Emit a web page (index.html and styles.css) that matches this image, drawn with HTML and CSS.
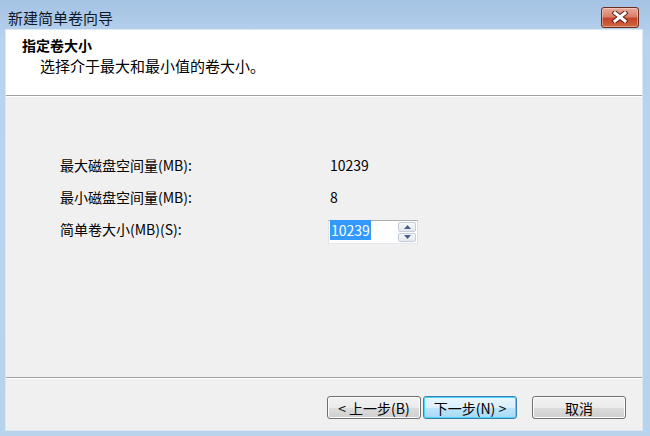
FILE: index.html
```html
<!DOCTYPE html>
<html lang="zh-CN">
<head>
  <meta charset="UTF-8">
  <title>新建简单卷向导</title>
  <link rel="stylesheet" href="styles.css">
</head>
<body>

<div class="ventana">
  <!-- Barra de título -->
  <div class="titulo">
    <span class="titulo-texto">新建简单卷向导</span>
    <div class="cerrar">
      <svg width="16" height="12" viewBox="0 0 16 12">
        <path d="M3 2 L13 10 M13 2 L3 10" stroke="#5a2014" stroke-width="5" stroke-linecap="square"/>
        <path d="M3 2 L13 10 M13 2 L3 10" stroke="#ffffff" stroke-width="3" stroke-linecap="square"/>
      </svg>
    </div>
  </div>

  <div class="cliente">
    <!-- Cabecera blanca -->
    <div class="cabecera">
      <div class="cabecera-titulo">指定卷大小</div>
      <div class="cabecera-sub">选择介于最大和最小值的卷大小。</div>
    </div>

    <!-- Contenido -->
    <div class="cuerpo">
      <div class="fila">
        <span class="etiqueta">最大磁盘空间量(MB):</span>
        <span class="valor">10239</span>
      </div>
      <div class="fila">
        <span class="etiqueta">最小磁盘空间量(MB):</span>
        <span class="valor">8</span>
      </div>
      <div class="fila">
        <span class="etiqueta">简单卷大小(MB)(S):</span>
        <div class="spin">
          <div class="spin-campo"><span class="seleccion">10239</span></div>
          <div class="spin-botones">
            <div class="spin-btn">
              <svg width="7" height="4" viewBox="0 0 7 4"><path d="M0 4 L3.5 0 L7 4 Z" fill="#4b5f86"/></svg>
            </div>
            <div class="spin-btn">
              <svg width="7" height="4" viewBox="0 0 7 4"><path d="M0 0 L3.5 4 L7 0 Z" fill="#4b5f86"/></svg>
            </div>
          </div>
        </div>
      </div>
    </div>

    <!-- Botones -->
    <div class="pie">
      <button class="boton">&lt; 上一步(B)</button>
      <button class="boton activo">下一步(N) &gt;</button>
      <button class="boton cancelar">取消</button>
    </div>
  </div>
</div>

</body>
</html>
```

FILE: styles.css
```css
* {
  box-sizing: border-box;
}

body {
  margin: 0;
  font-family: "Noto Sans CJK SC", "Noto Sans", sans-serif;
  font-size: 14px;
  color: #000;
  background: #b9d1ea;
}

.ventana {
  width: 650px;
  height: 436px;
  display: flex;
  flex-direction: column;
  padding: 0 8px 6px 6px;
  background: linear-gradient(#a4c2e4, #b9d3ee 40px, #bad3ed);
}

.titulo {
  height: 30px;
  display: flex;
  align-items: center;
  justify-content: space-between;
  padding-left: 2px;
}

.titulo-texto {
  font-size: 15px;
  color: #0f1a28;
  margin-top: 4px;
}

.cerrar {
  width: 38px;
  height: 21px;
  margin-right: 3px;
  margin-top: 4px;
  border: 1px solid #6b2c22;
  border-radius: 3px;
  background: linear-gradient(#e9aa9a, #d9806b 45%, #c4452b 55%, #d0663f);
  display: flex;
  align-items: center;
  justify-content: center;
  box-shadow: inset 0 0 0 1px rgba(255, 255, 255, 0.35);
}

.cliente {
  flex: 1;
  display: flex;
  flex-direction: column;
  background: #f0f0f0;
  box-shadow: 0 0 0 1px #dce7f4;
}

.cabecera {
  height: 66px;
  background: #fff;
  border-bottom: 1px solid #a0a0a0;
  padding: 5px 0 0 16px;
}

.cabecera-titulo {
  font-weight: bold;
  line-height: 20px;
}

.cabecera-sub {
  font-size: 15px;
  line-height: 22px;
  padding-left: 18px;
}

.cuerpo {
  flex: 1;
  padding: 52px 0 0 54px;
  border-top: 1px solid #fff;
}

.fila {
  display: flex;
  align-items: center;
  height: 32px;
}

.etiqueta {
  width: 270px;
}

.spin {
  display: flex;
  width: 90px;
  height: 24px;
  margin-left: -2px;
  margin-top: 6px;
  background: #fff;
  border: 1px solid #abadb3;
  border-color: #abadb3 #dbdfe6 #e3e9ef #e2e3ea;
}

.spin-campo {
  flex: 1;
  padding: 1px 0 0 1px;
  line-height: 17px;
}

.seleccion {
  background: #3399ff;
  color: #fff;
  padding: 0 1px;
}

.spin-botones {
  width: 18px;
  display: flex;
  flex-direction: column;
  margin: 1px;
  gap: 1px;
}

.spin-btn {
  flex: 1;
  display: flex;
  align-items: center;
  justify-content: center;
  border: 1px solid #c5cdd9;
  border-radius: 2px;
  background: linear-gradient(#f5f7fa, #e4e8ee);
}

.pie {
  height: 53px;
  border-top: 1px solid #a0a0a0;
  box-shadow: inset 0 1px 0 #fff;
  display: flex;
  justify-content: flex-end;
  align-items: flex-start;
  padding: 18px 16px 0 0;
}

.boton {
  font-family: "Noto Sans CJK SC", "Noto Sans", sans-serif;
  font-size: 14px;
  width: 94px;
  height: 23px;
  padding: 0;
  margin-left: 2px;
  border: 1px solid #707070;
  border-radius: 3px;
  color: #000;
  background: linear-gradient(#f2f2f2, #ebebeb 50%, #dddddd 50%, #cfcfcf);
  box-shadow: inset 0 0 0 1px #fcfcfc;
  line-height: 20px;
}

.boton.activo {
  border-color: #3c7fb1;
  background: linear-gradient(#eaf6fd, #d9f0fc 50%, #bee6fd 50%, #a7d9f5);
  box-shadow: inset 0 0 0 1px #48d7fb;
}

.boton.cancelar {
  margin-left: 15px;
}
```
